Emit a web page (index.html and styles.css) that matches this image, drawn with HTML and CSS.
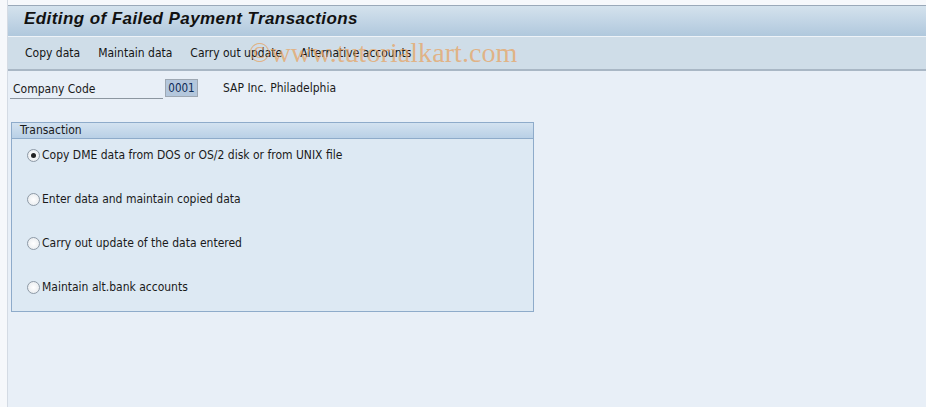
FILE: index.html
```html
<!DOCTYPE html>
<html>
<head>
	<meta charset="UTF-8">
	<title>Editing of Failed Payment Transactions</title>
	<link rel="stylesheet" href="styles.css">
</head>
<body>
	<div class="side"></div>
	<div class="main">
		<div class="titlebar">
			<h1>Editing of Failed Payment Transactions</h1>
		</div>
		<div class="toolbar">
			<span class="tool">Copy data</span>
			<span class="tool">Maintain data</span>
			<span class="tool">Carry out update</span>
			<span class="tool">Alternative accounts</span>
			<span class="watermark">©www.tutorialkart.com</span>
		</div>
		<div class="content">
			<div class="field-row">
				<label class="field-label" for="bukrs">Company Code</label>
				<span class="field-input" id="bukrs">0001</span>
				<span class="field-text">SAP Inc. Philadelphia</span>
			</div>
			<div class="group">
				<div class="group-head">Transaction</div>
				<ul class="options">
					<li><span class="radio checked"></span>Copy DME data from DOS or OS/2 disk or from UNIX file</li>
					<li><span class="radio"></span>Enter data and maintain copied data</li>
					<li><span class="radio"></span>Carry out update of the data entered</li>
					<li><span class="radio"></span>Maintain alt.bank accounts</li>
				</ul>
			</div>
		</div>
	</div>
</body>
</html>
```

FILE: styles.css
```css
html, body {
	margin: 0;
	height: 100%;
}
body {
	display: flex;
	background-color: #f6f8fb;
	font-family: "DejaVu Sans Condensed", "Liberation Sans", sans-serif;
	font-size: 12px;
	color: #1a1a1a;
}
.side {
	width: 7px;
	border-right: 1px solid #d4dbe4;
	flex-shrink: 0;
}
.main {
	flex: 1;
	display: flex;
	flex-direction: column;
	padding-top: 5px;
}
.titlebar {
	height: 32px;
	border-top: 1px solid #9aa9b9;
	background: linear-gradient(#d4e2ed, #b0c8dd);
	border-bottom: 1px solid #eef3f8;
	display: flex;
	align-items: center;
	box-sizing: border-box;
	padding-bottom: 4px;
}
h1 {
	margin: 0 0 0 16px;
	font-family: "Liberation Sans", sans-serif;
	font-size: 17px;
	font-weight: bold;
	font-style: italic;
	color: #111;
	letter-spacing: 0.42px;
}
.toolbar {
	position: relative;
	height: 32px;
	background-color: #cfdde8;
	border-bottom: 2px solid #a9b7c5;
	display: flex;
	align-items: center;
	padding-left: 17px;
	gap: 18px;
}
.tool {
	color: #151515;
}
.watermark {
	position: absolute;
	left: 241px;
	top: 0px;
	font-family: "Liberation Serif", serif;
	font-size: 28.2px;
	color: rgba(232, 160, 90, 0.7);
}
.content {
	flex: 1;
	background-color: #e8eff7;
	padding: 8px 0 0 2px;
}
.field-row {
	display: flex;
	align-items: center;
	height: 18px;
}
.field-label {
	width: 150px;
	padding-left: 3px;
	border-bottom: 1px solid #8c96a0;
	line-height: 17px;
	margin-top: 3px;
}
.field-input {
	margin-left: 2px;
	width: 31px;
	height: 16px;
	border: 1px solid #9ea8b3;
	background-color: #b4c7dc;
	color: #0c2a55;
	line-height: 16px;
	text-align: center;
	font-size: 11.5px;
}
.field-text {
	margin-left: 25px;
}
.group {
	margin: 25px 0 0 1px;
	width: 521px;
	height: 188px;
	border: 1px solid #8eabca;
	background-color: #dde9f3;
}
.group-head {
	height: 15px;
	line-height: 15px;
	padding-left: 8px;
	background: linear-gradient(#d3e2f0, #b9d0e6);
	border-bottom: 1px solid #8eabca;
}
.options {
	list-style-type: none;
	margin: 0;
	padding: 7px 0 0 15px;
	display: flex;
	flex-direction: column;
	gap: 26px;
}
.options li {
	display: flex;
	align-items: center;
	height: 18px;
}
.radio {
	width: 11px;
	height: 11px;
	border: 1px solid #8e9aa6;
	border-radius: 50%;
	background: radial-gradient(#ffffff, #e4e8ec);
	margin-right: 2px;
	display: flex;
	align-items: center;
	justify-content: center;
}
.radio.checked::after {
	content: "";
	width: 5px;
	height: 5px;
	border-radius: 50%;
	background-color: #222;
}
```
